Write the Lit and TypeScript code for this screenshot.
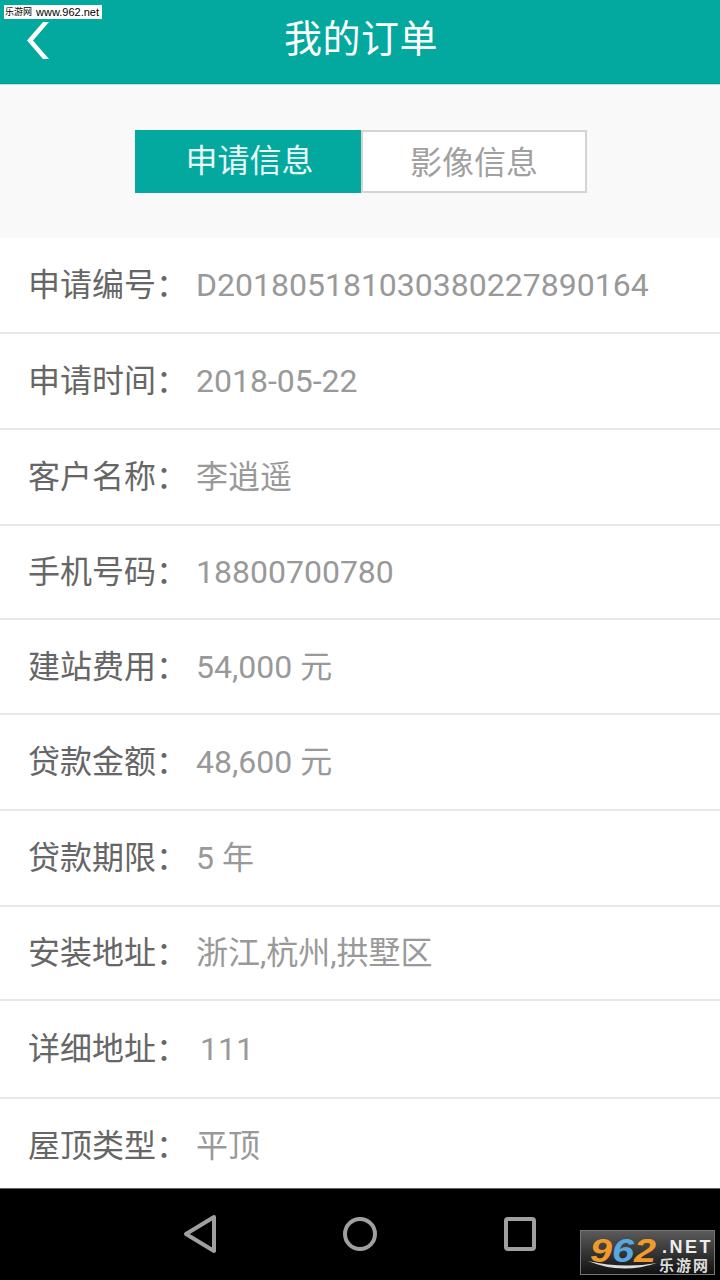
import { LitElement, html, css, svg } from "lit";
import { customElement } from "lit/decorators.js";

const rows: [string, string, number][] = [
  ["申请编号", "D201805181030380227890164", 96],
  ["申请时间", "2018-05-22", 96],
  ["客户名称", "李逍遥", 96],
  ["手机号码", "18800700780", 94],
  ["建站费用", "54,000 元", 95],
  ["贷款金额", "48,600 元", 96],
  ["贷款期限", "5 年", 96],
  ["安装地址", "浙江,杭州,拱墅区", 94],
  ["详细地址", "111", 98],
  ["屋顶类型", "平顶", 94],
];

@customElement("app-root")
export class AppRoot extends LitElement {
  static styles = css`
    :host {
      display: block;
      width: 720px;
      height: 1280px;
      position: relative;
      overflow: hidden;
      background: #fff;
      font-family: Roboto, "Noto Sans CJK SC", sans-serif;
    }
    .page {
      display: flex;
      flex-direction: column;
      height: 1280px;
    }
    .header {
      height: 84px;
      flex: none;
      box-sizing: content-box;
      background: #03a89e;
      border-bottom: 1px solid #b5e3e0;
      box-shadow: inset 0 -1px 0 #069a90;
      display: flex;
      align-items: center;
      justify-content: center;
      position: relative;
      color: #fff;
      font-size: 38px;
      letter-spacing: 0.5px;
    }
    .header span {
      padding: 0 0 14px 2px;
    }
    .back {
      position: absolute;
      left: 27px;
      top: 22px;
    }
    .tabs-wrap {
      height: 153px;
      flex: none;
      background: #f9f9f9;
      padding: 45px 0 0 135px;
      box-sizing: border-box;
    }
    .tabs {
      display: flex;
      height: 63px;
    }
    .tab {
      flex: none;
      width: 226px;
      display: flex;
      align-items: center;
      justify-content: center;
      font-size: 32px;
      box-sizing: border-box;
    }
    .tab.on {
      background: #03a89e;
      color: #e8f8f6;
      padding: 0 0 8px 3px;
    }
    .tab.off {
      background: #fff;
      color: #a0a0a0;
      border: 2px solid #d4d4d4;
      padding: 0 0 4px 0;
    }
    .row {
      display: flex;
      align-items: center;
      box-sizing: border-box;
      padding-left: 28px;
      border-bottom: 2px solid #e8e8e8;
      background: #fff;
      flex: none;
    }
    .row:last-child {
      border-bottom: none;
    }
    .label {
      width: 168px;
      flex: none;
      font-size: 32px;
      line-height: 40px;
      color: #666;
      white-space: nowrap;
    }
    .value {
      font-size: 32px;
      line-height: 40px;
      color: #999;
      white-space: pre;
    }
    .value.indent {
      margin-left: 4px;
    }
    .list {
      flex: 1;
      overflow: hidden;
    }
    .nav {
      height: 92px;
      flex: none;
      background: #000;
      border-top: 1px solid #666;
      box-sizing: border-box;
    }
    .nav svg {
      display: block;
    }
    .wm-top {
      position: absolute;
      left: 4px;
      top: 5px;
      height: 14px;
      width: 98px;
      display: flex;
      align-items: center;
      gap: 4px;
      background: #fff;
      color: #000;
      font-size: 11px;
      line-height: 14px;
      white-space: nowrap;
      font-family: "Liberation Sans", "Noto Sans CJK SC", sans-serif;
      padding-left: 1px;
      box-sizing: border-box;
    }
    .wm-top i {
      font-style: normal;
      font-size: 9px;
    }
    .wm-logo {
      position: absolute;
      left: 580px;
      top: 1230px;
      width: 135px;
      height: 45px;
      box-sizing: border-box;
      border: 1px solid #777;
      background: linear-gradient(#5a5a5a, #111);
      overflow: hidden;
    }
    .wm-swoosh {
      position: absolute;
      left: 0;
      top: 0;
    }
    .wm-num {
      position: absolute;
      left: 9px;
      top: 3px;
      font: italic 700 33px/33px "Liberation Sans", sans-serif;
      color: #f09a2a;
      transform: scaleX(1.2);
      transform-origin: left top;
    }
    .wm-num b {
      color: #58a8e0;
    }
    .wm-net {
      position: absolute;
      left: 81px;
      top: 7px;
      font: 700 18px/18px "Liberation Sans", sans-serif;
      letter-spacing: 2.5px;
      color: #eee;
    }
    .wm-cn {
      position: absolute;
      left: 78px;
      top: 26px;
      font: 700 15px/16px "Noto Sans CJK SC", sans-serif;
      letter-spacing: 2px;
      color: #ddd;
    }
  `;

  render() {
    return html`
      <div class="page">
        <div class="header">
          <svg class="back" width="22" height="37" viewBox="0 0 22 37">
            <path d="M16 0 H22 L6 18.5 L22 37 H16 L0 18.5 Z" fill="#fff" />
          </svg>
          <span>我的订单</span>
        </div>
        <div class="tabs-wrap">
          <div class="tabs">
            <div class="tab on">申请信息</div>
            <div class="tab off">影像信息</div>
          </div>
        </div>
        <div class="list">
          ${rows.map(
            ([k, v, h]) => html`
              <div class="row" style="height:${h}px">
                <div class="label">${k}：</div>
                <div class="value ${v === "111" ? "indent" : ""}">${v}</div>
              </div>
            `
          )}
        </div>
        <div class="nav">
          <svg width="720" height="91" viewBox="0 0 720 91">
            ${svg`
              <path d="M214 28 L186 45 L214 62 Z" fill="none" stroke="#a0a0a0" stroke-width="4" stroke-linejoin="round" />
              <circle cx="360" cy="45" r="15" fill="none" stroke="#a0a0a0" stroke-width="4" />
              <rect x="506" y="30" width="28" height="30" rx="2" fill="none" stroke="#a0a0a0" stroke-width="4" />
            `}
          </svg>
        </div>
        <div class="wm-top"><i>乐游网</i><span>www.962.net</span></div>
      </div>
      <div class="wm-logo">
        <svg class="wm-swoosh" width="133" height="43" viewBox="0 0 133 43">
          <path d="M7 30 Q40 44 76 32 Q42 38 7 30 Z" fill="#ddd" />
        </svg>
        <span class="wm-num">9<b>6</b>2</span>
        <span class="wm-net">.NET</span>
        <span class="wm-cn">乐游网</span>
      </div>
    `;
  }
}
